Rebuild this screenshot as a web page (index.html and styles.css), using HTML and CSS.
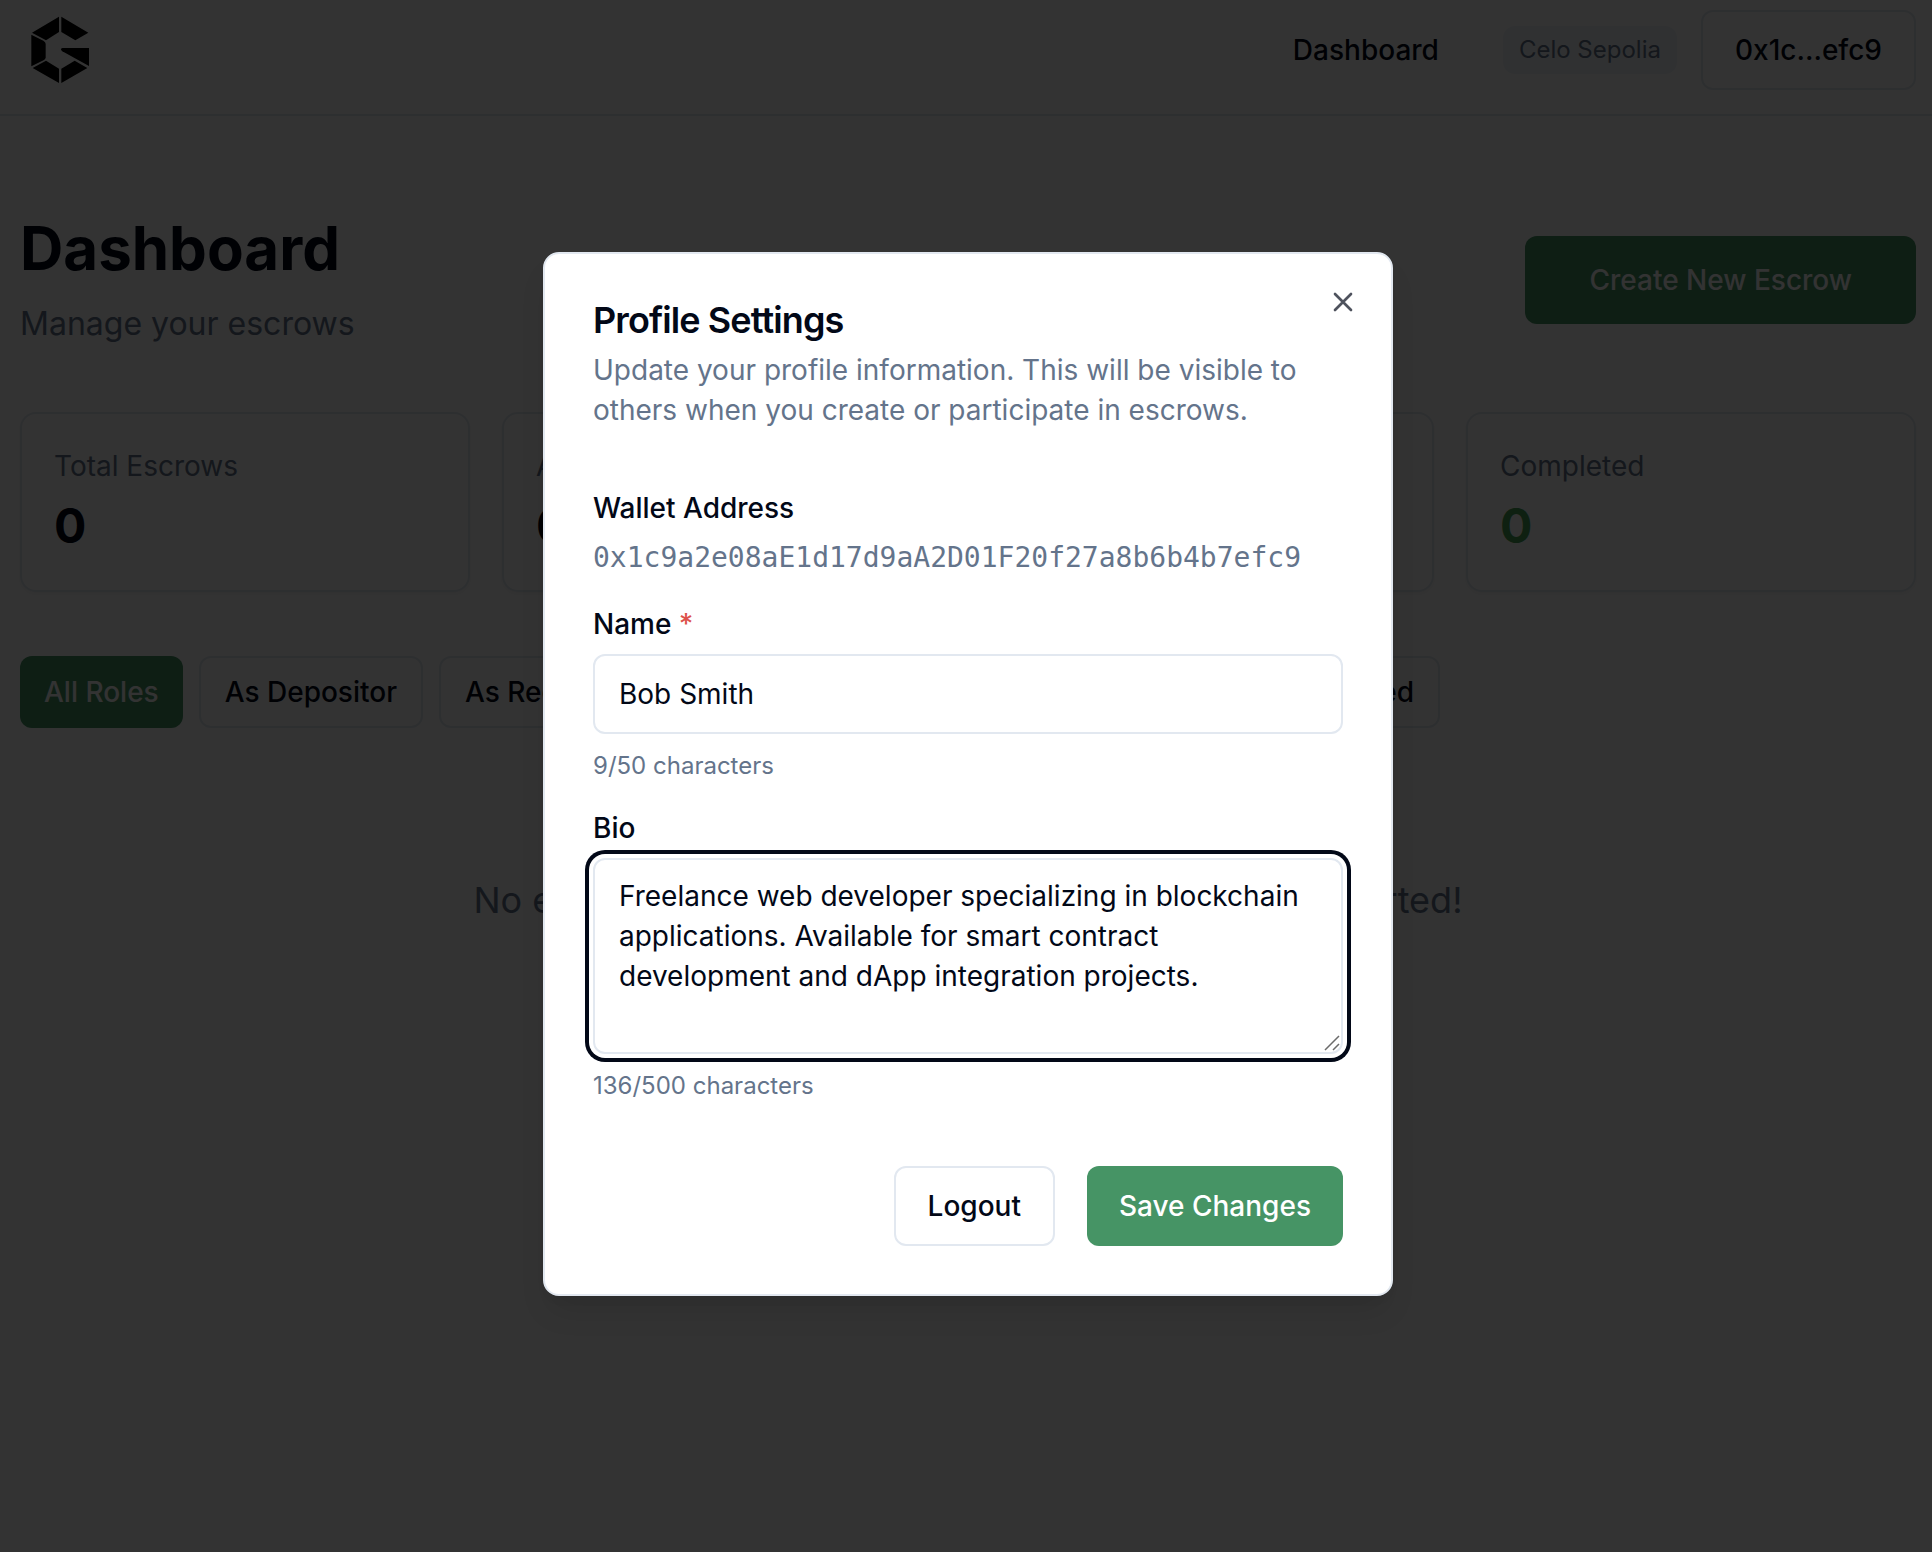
FILE: index.html
```html
<!DOCTYPE html>
<html lang="en">
<head>
<meta charset="utf-8">
<title>Dashboard</title>
<link rel="stylesheet" href="styles.css">
</head>
<body>
<header class="header">
  <svg class="logo" viewBox="90 45 180 210" aria-label="Logo">
    <path d="M177 50V96L138 121L96 98Z"/>
    <path d="M184 50L265 98L226 121L184 96Z"/>
    <path d="M94 104L130 122Q137 126 137 132V172Q137 177 132 180L94 199Z"/>
    <path d="M138 182L177 206V249L98 204Z"/>
    <path d="M184 206L224 182L262 204L184 249Z"/>
    <path d="M188 144H267V198L187 154Q183 151 183 148Q184 144 188 144Z"/>
  </svg>
  <nav class="nav">
    <a class="nav-link">Dashboard</a>
    <span class="network">Celo Sepolia</span>
    <button class="btn btn-outline">0x1c...efc9</button>
  </nav>
</header>
<main class="main">
  <div class="heading">
    <div>
      <h1 class="title">Dashboard</h1>
      <p class="subtitle">Manage your escrows</p>
    </div>
    <button class="btn btn-primary btn-large">Create New Escrow</button>
  </div>
  <section class="stats">
    <div class="card"><p class="card-label">Total Escrows</p><p class="card-value">0</p></div>
    <div class="card"><p class="card-label">Active</p><p class="card-value">0</p></div>
    <div class="card"><p class="card-label">Disputed</p><p class="card-value">0</p></div>
    <div class="card"><p class="card-label">Completed</p><p class="card-value card-value-green">0</p></div>
  </section>
  <div class="filters">
    <div class="filter-group">
      <button class="btn btn-primary btn-small">All Roles</button>
      <button class="btn btn-outline btn-small">As Depositor</button>
      <button class="btn btn-outline btn-small">As Recipient</button>
    </div>
    <div class="filter-group">
      <button class="btn btn-outline btn-small">Active</button>
      <button class="btn btn-outline btn-small">Completed</button>
    </div>
  </div>
  <p class="empty">No escrows found. Create your first escrow to get started!</p>
</main>
<div class="overlay">
  <div class="dialog" role="dialog" aria-labelledby="dialog-title">
    <h2 class="dialog-title" id="dialog-title">Profile Settings</h2>
    <p class="dialog-text">Update your profile information. This will be visible to others when you create or participate in escrows.</p>
    <div class="form">
      <div class="field">
        <span class="label">Wallet Address</span>
        <p class="address">0x1c9a2e08aE1d17d9aA2D01F20f27a8b6b4b7efc9</p>
      </div>
      <div class="field">
        <label class="label" for="name">Name <span class="required">*</span></label>
        <input class="input" id="name" value="Bob Smith">
        <p class="hint">9/50 characters</p>
      </div>
      <div class="field">
        <label class="label" for="bio">Bio</label>
        <div class="area-wrap">
          <textarea class="area" id="bio" spellcheck="false">Freelance web developer specializing in blockchain applications. Available for smart contract development and dApp integration projects.</textarea>
          <svg class="grip" viewBox="0 0 16 16"><path d="M1 15L15 1M9 15L15 9"/></svg>
        </div>
        <p class="hint">136/500 characters</p>
      </div>
    </div>
    <div class="actions">
      <button class="btn btn-outline">Logout</button>
      <button class="btn btn-primary">Save Changes</button>
    </div>
    <svg class="close" viewBox="0 0 24 24"><path d="M18 6L6 18M6 6l12 12"/></svg>
  </div>
</div>
</body>
</html>
```
FILE: styles.css
```css
* { box-sizing: border-box; }
body {
  margin: 0;
  height: 1552px;
  overflow: hidden;
  background: #fff;
  color: #020817;
  font: 28px/40px Inter, "Liberation Sans", sans-serif;
}
h1, h2, p { margin: 0; }

.header {
  display: flex;
  justify-content: space-between;
  align-items: center;
  height: 116px;
  padding: 10px 16px 24px 30px;
  border-bottom: 2px solid #e2e8f0;
}
.logo { width: 60px; height: 70px; fill: #000; }
.nav { display: flex; align-items: center; gap: 24px; }
.nav-link { font-weight: 500; margin-right: 40px; }
.network {
  padding: 8px 16px;
  border-radius: 12px;
  background: #f1f5f9;
  color: #64748b;
  font-size: 24px;
  line-height: 32px;
}

.btn {
  height: 80px;
  padding: 0 32px;
  border: 0;
  border-radius: 12px;
  font: 500 28px/40px Inter, "Liberation Sans", sans-serif;
  color: #020817;
  white-space: nowrap;
}
.btn-outline { border: 2px solid #e2e8f0; background: #fff; }
.btn-primary { background: #469465; color: #fff; }
.btn-large { height: 88px; padding: 0 64px; }
.btn-small { height: 72px; padding: 0 24px; }

.main { padding: 96px 16px 0 20px; }
.heading { display: flex; justify-content: space-between; align-items: center; }
.title { font-size: 60px; line-height: 72px; font-weight: 700; }
.subtitle { margin-top: 16px; font-size: 32px; line-height: 48px; color: #64748b; }
.stats {
  display: grid;
  grid-template-columns: repeat(4, 1fr);
  gap: 32px;
  margin-top: 64px;
}
.card {
  height: 180px;
  padding: 32px;
  border: 2px solid #e2e8f0;
  border-radius: 16px;
  box-shadow: 0 2px 4px rgba(0, 0, 0, .05);
}
.card-label { color: #64748b; }
.card-value { margin-top: 8px; font-size: 48px; line-height: 64px; font-weight: 700; }
.card-value-green { color: #45a055; }
.filters {
  display: flex;
  justify-content: space-between;
  width: 1420px;
  margin-top: 64px;
}
.filter-group { display: flex; gap: 16px; }
.empty {
  margin-top: 144px;
  text-align: center;
  font-size: 36px;
  line-height: 56px;
  color: #64748b;
}

.overlay {
  position: absolute;
  inset: 0;
  padding: 252px 0 0 543px;
  background: rgba(0, 0, 0, .8);
}
.dialog {
  position: relative;
  width: 850px;
  height: 1044px;
  padding: 48px;
  border: 2px solid #e2e8f0;
  border-radius: 16px;
  background: #fff;
  box-shadow: 0 20px 30px -6px rgba(0, 0, 0, .1), 0 8px 12px -8px rgba(0, 0, 0, .1);
}
.dialog-title { font-size: 36px; line-height: 36px; font-weight: 600; letter-spacing: -.025em; }
.dialog-text { margin-top: 12px; color: #64748b; }
.form { display: grid; gap: 32px; padding: 64px 0; }
.field { display: grid; gap: 16px; }
.label { font-weight: 500; line-height: 28px; }
.required { color: #dd524c; }
.address { font-family: "DejaVu Sans Mono", monospace; color: #64748b; }
.input, .area {
  display: block;
  width: 100%;
  border: 2px solid #e2e8f0;
  border-radius: 12px;
  background: #fff;
  color: #020817;
  font: 28px/40px Inter, "Liberation Sans", sans-serif;
  outline: 0;
}
.input { height: 80px; padding: 16px 24px; }
.area-wrap { position: relative; }
.area {
  height: 196px;
  padding: 16px 24px;
  resize: none;
  box-shadow: 0 0 0 4px #fff, 0 0 0 8px #020817;
}
.grip {
  position: absolute;
  right: 3px;
  bottom: 3px;
  width: 16px;
  height: 16px;
  fill: none;
  stroke: #6b6b6b;
  stroke-width: 1.5;
}
.hint { font-size: 24px; line-height: 32px; color: #64748b; }
.actions { display: flex; justify-content: flex-end; gap: 32px; }
.close {
  position: absolute;
  top: 32px;
  right: 32px;
  width: 32px;
  height: 32px;
  fill: none;
  stroke: #4e525d;
  stroke-width: 2;
  stroke-linecap: round;
}
```
